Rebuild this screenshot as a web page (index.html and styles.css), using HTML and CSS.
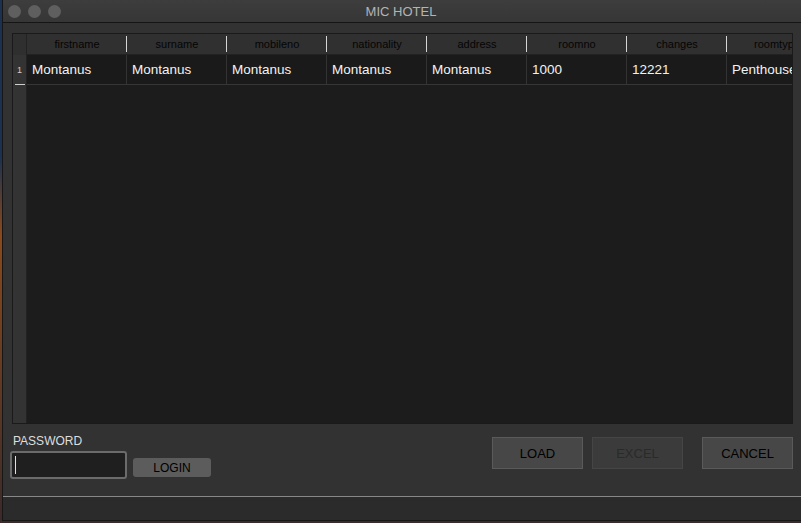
FILE: index.html
```html
<!DOCTYPE html>
<html>
<head>
<meta charset="utf-8">
<link rel="stylesheet" href="styles.css">
</head>
<body>
<div class="window">
  <div class="titlebar">
    <div class="lights"><span class="light"></span><span class="light"></span><span class="light"></span></div>
    <div class="title">MIC HOTEL</div>
    <div></div>
  </div>
  <div class="content">
    <div class="table">
      <div class="rowheads">
        <div class="rh-head"></div>
        <div class="rh-cell">1</div>
        <div class="rh-mark"></div>
      </div>
      <div class="grid">
        <div class="hrow">
          <div class="hcell">firstname</div>
          <div class="hcell">surname</div>
          <div class="hcell">mobileno</div>
          <div class="hcell">nationality</div>
          <div class="hcell">address</div>
          <div class="hcell">roomno</div>
          <div class="hcell">changes</div>
          <div class="hcell">roomtype</div>
        </div>
        <div class="drow">
          <div class="dcell">Montanus</div>
          <div class="dcell">Montanus</div>
          <div class="dcell">Montanus</div>
          <div class="dcell">Montanus</div>
          <div class="dcell">Montanus</div>
          <div class="dcell">1000</div>
          <div class="dcell">12221</div>
          <div class="dcell">Penthouse</div>
        </div>
      </div>
    </div>
    <div class="controls">
      <div class="login">
        <div class="label">PASSWORD</div>
        <div class="login-row">
          <div class="input"><span class="caret"></span></div>
          <button class="btn-login">LOGIN</button>
        </div>
      </div>
      <div class="actions">
        <button class="btn">LOAD</button>
        <button class="btn disabled">EXCEL</button>
        <button class="btn cancel">CANCEL</button>
      </div>
    </div>
  </div>
  <div class="footer"></div>
</div>
</body>
</html>
```
FILE: styles.css
```css
* { box-sizing: border-box; }
html, body { margin: 0; padding: 0; }
body {
  width: 801px;
  height: 523px;
  overflow: hidden;
  background: linear-gradient(#1c3150 0%, #1c3150 30%, #8a4a1c 45%, #3a2a2a 100%);
  font-family: "Liberation Sans", Arial, sans-serif;
}
.window {
  margin-left: 2px;
  width: 799px;
  height: 521px;
  background: #323232;
  border-left: 1px solid #171717;
  border-bottom: 1px solid #171717;
  display: flex;
  flex-direction: column;
}
.titlebar {
  height: 23px;
  flex: none;
  background: linear-gradient(#3d3d3d, #363636);
  border-bottom: 1px solid #151515;
  display: grid;
  grid-template-columns: 1fr auto 1fr;
  align-items: center;
}
.lights { display: flex; gap: 7px; padding-left: 5px; }
.light { width: 13px; height: 13px; border-radius: 50%; background: #5f5f5f; }
.title { color: #b4b4b4; font-size: 13px; padding-right: 2px; }
.content {
  flex: 1;
  display: flex;
  flex-direction: column;
  padding: 10px 8px 0 9px;
  border-bottom: 1px solid #888;
}
.table {
  width: 781px;
  height: 391px;
  flex: none;
  border: 1px solid #1a1a1a;
  background: #1c1c1c;
  display: flex;
  overflow: hidden;
}
.rowheads {
  width: 14px;
  flex: none;
  background: #333333;
  border-right: 1px solid #222;
  position: relative;
}
.rh-head { height: 21px; background: #2f2f2f; }
.rh-cell {
  height: 31px;
  color: #cfcfcf;
  font-size: 9px;
  line-height: 30px;
  padding-left: 4px;
}
.rh-mark { position: absolute; left: 2px; top: 50px; width: 10px; height: 1px; background: #cfcfcf; }
.grid { flex: 1; overflow: hidden; }
.hrow { display: flex; height: 21px; background: #303030; border-bottom: 1px solid #222; }
.hcell {
  width: 100px;
  flex: none;
  font-size: 11px;
  color: #050505;
  text-align: center;
  line-height: 20px;
  position: relative;
  white-space: nowrap;
}
.hcell::before {
  content: "";
  position: absolute;
  left: -1px;
  top: 2px;
  bottom: 2px;
  width: 1px;
  background: #d6d6d6;
}
.drow { display: flex; height: 30px; background: #1a1a1a; border-bottom: 1px solid #363636; }
.dcell {
  width: 100px;
  flex: none;
  color: #f2f2f2;
  font-size: 13.5px;
  line-height: 29px;
  padding-left: 5px;
  border-right: 1px solid #333;
  white-space: nowrap;
  overflow: hidden;
}
.controls {
  flex: 1;
  display: flex;
  justify-content: space-between;
}
.login { padding-top: 10px; margin-left: -2px; }
.label { color: #dedede; font-size: 12px; line-height: 14px; padding-left: 3px; }
.login-row { display: flex; align-items: flex-end; gap: 6px; margin-top: 3px; }
.input {
  width: 117px;
  height: 28px;
  border: 2px solid #6b6b6b;
  border-radius: 3px;
  background: #1f1f1f;
  position: relative;
}
.caret { position: absolute; left: 3px; top: 3px; width: 1px; height: 18px; background: #e0e0e0; }
.btn-login {
  width: 78px;
  height: 19px;
  margin-bottom: 2px;
  border: none;
  border-radius: 3px;
  background: #5c5c5c;
  color: #000;
  font-family: inherit;
  font-size: 12px;
  padding: 0;
}
.actions { display: flex; gap: 9px; padding-top: 13px; }
.btn {
  width: 91px;
  height: 32px;
  border: 1px solid #5a5a5a;
  background: #474747;
  color: #000;
  font-family: inherit;
  font-size: 13px;
  padding: 0;
}
.btn.disabled { background: #3b3b3b; border-color: #454545; color: #2a2a2a; }
.btn.cancel { margin-left: 10px; }
.footer { height: 23px; flex: none; background: #2b2b2b; }
```
